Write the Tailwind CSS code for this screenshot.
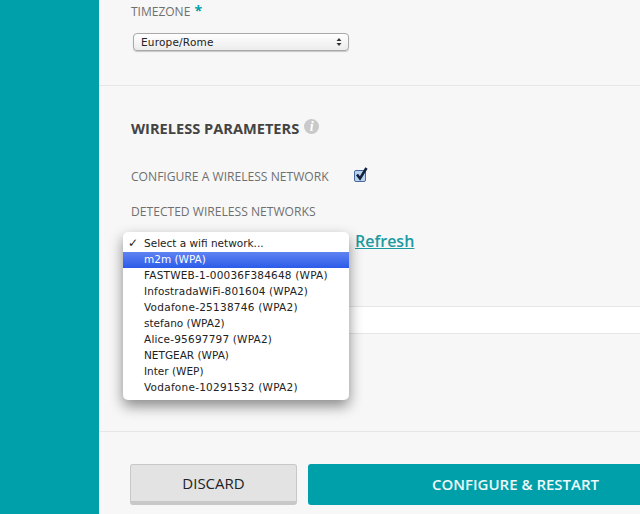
<!DOCTYPE html>
<html lang="en">
<head>
  <meta charset="UTF-8" />
  <title>Wireless parameters</title>
  <script src="https://cdn.jsdelivr.net/npm/@tailwindcss/browser@4"></script>
</head>
<body class="bg-[#f7f7f7]">
  <div class="relative flex h-[514px] w-[640px] overflow-hidden font-['Open_Sans',sans-serif]">
    <aside class="w-[99px] shrink-0 bg-[#00a0aa]"></aside>

    <main class="w-[541px] shrink-0">
      <!-- timezone -->
      <section class="h-[86px] border-b border-[#e6e6e6] pl-[32px] pt-[2px]">
        <p class="h-[18px] text-[12px] leading-[18px] text-[#6f6f6f]">TIMEZONE <span class="ml-[1px] text-[14px] font-bold text-[#00a0aa]">*</span></p>
        <div class="mt-[13px] ml-[2px] flex h-[18px] w-[216px] items-center justify-between rounded-[4px] border border-[#a9a9a9] bg-gradient-to-b from-white to-[#ececec] pl-[7px] pr-[6px] shadow-[0_1px_1px_rgba(0,0,0,0.2)]">
          <span class="font-['DejaVu_Sans',sans-serif] text-[10.5px] leading-none tracking-[0.2px] text-[#222]">Europe/Rome</span>
          <svg width="6" height="10" viewBox="0 0 6 10"><path d="M3 1 L5.5 4 H0.5 Z M3 9 L5.5 6 H0.5 Z" fill="#333"/></svg>
        </div>
      </section>

      <!-- wireless -->
      <section class="h-[346px] border-b border-[#e6e6e6] pl-[32px] pt-[32px]">
        <div class="flex h-[20px] items-center">
          <h2 class="text-[14.6px] leading-[20px] font-bold text-[#444]">WIRELESS PARAMETERS</h2>
          <span class="ml-[5px] mb-[3px] flex h-[15px] w-[15px] items-center justify-center rounded-full bg-[#c9c9c9] font-['Liberation_Serif',serif] text-[14px] font-bold italic leading-none text-white">i</span>
        </div>
        <div class="mt-[30px] flex h-[18px] items-center">
          <span class="w-[223px] text-[12.1px] leading-[18px] text-[#6f6f6f]">CONFIGURE A WIRELESS NETWORK</span>
          <span class="relative mb-[2px] h-[12px] w-[12px] rounded-[2px] border border-[#47699c] bg-[#bcd3ee]">
            <svg class="absolute left-[-1px] top-[-5px]" width="15" height="16" viewBox="0 0 15 16"><path d="M3 8.5 L6 12.5 L12.5 2" fill="none" stroke="#12233f" stroke-width="2.6"/></svg>
          </span>
        </div>
        <p class="mt-[17px] h-[18px] text-[12.1px] leading-[18px] text-[#6f6f6f]">DETECTED WIRELESS NETWORKS</p>
        <div class="mt-[8px] flex h-[24px] items-center pl-[224px]">
          <a class="text-[16px] font-semibold leading-[24px] text-[#1b9aa2] underline">Refresh</a>
        </div>
        <div class="mt-[53px] h-[28px] border-y border-[#e6e6e6] bg-white"></div>
      </section>

      <!-- actions -->
      <div class="flex gap-[11px] pl-[31px] pt-[32px]">
        <button class="h-[41px] w-[167px] shrink-0 rounded-[3px] border border-b-[4px] border-[#c8c8c8] bg-[#e3e3e3] text-[15px] font-medium text-[#222]">DISCARD</button>
        <button class="h-[41px] w-[415px] shrink-0 rounded-[3px] bg-[#00a0aa] text-[15px] font-semibold text-[#eef9fa]">CONFIGURE &amp; RESTART</button>
      </div>
    </main>

    <!-- open select menu -->
    <ul class="absolute left-[123px] top-[232px] w-[226px] rounded-[5px] bg-white pt-[3px] pb-[5px] font-['DejaVu_Sans',sans-serif] text-[10.5px] leading-[16px] text-[#222] shadow-[0_6px_14px_rgba(0,0,0,0.45)]">
      <li class="relative h-[17px] pl-[21px]"><span class="absolute left-[5px] text-[12px] font-bold">✓</span>Select a wifi network...</li>
      <li class="h-[16px] bg-gradient-to-b from-[#5f82f2] to-[#2b5be8] pl-[21px] leading-[14px] text-white">m2m (WPA)</li>
      <li class="h-[15px] pl-[21px] leading-[14px] tracking-[0.2px]">FASTWEB-1-00036F384648 (WPA)</li>
      <li class="pl-[21px] tracking-[0.15px]">InfostradaWiFi-801604 (WPA2)</li>
      <li class="pl-[21px] tracking-[0.25px]">Vodafone-25138746 (WPA2)</li>
      <li class="pl-[21px]">stefano (WPA2)</li>
      <li class="pl-[21px] tracking-[0.2px]">Alice-95697797 (WPA2)</li>
      <li class="pl-[21px]">NETGEAR (WPA)</li>
      <li class="pl-[21px]">Inter (WEP)</li>
      <li class="pl-[21px] tracking-[0.25px]">Vodafone-10291532 (WPA2)</li>
    </ul>
  </div>
</body>
</html>
